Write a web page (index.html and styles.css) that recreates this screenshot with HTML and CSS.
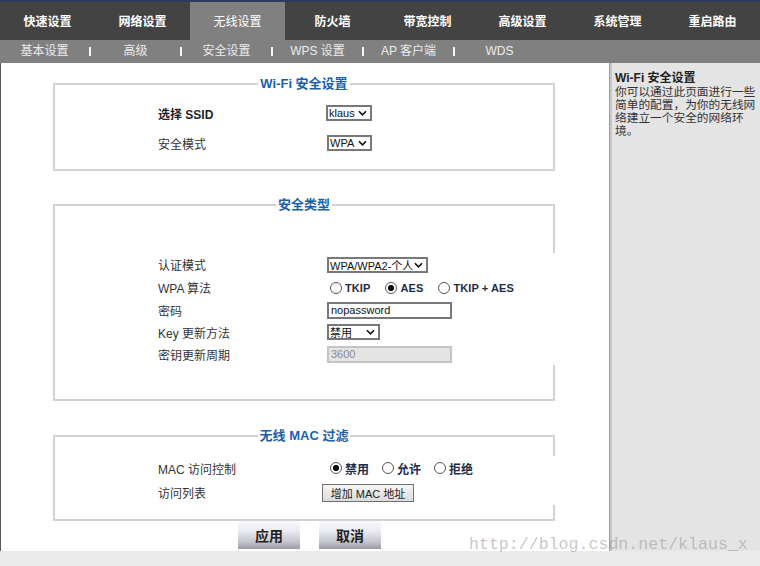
FILE: index.html
```html
<!DOCTYPE html>
<html lang="zh-CN">
<head>
<meta charset="utf-8">
<title>无线安全设置</title>
<link rel="stylesheet" href="styles.css">
</head>
<body>
<div class="topline"></div>
<nav class="nav">
  <a class="tab">快速设置</a>
  <a class="tab">网络设置</a>
  <a class="tab active">无线设置</a>
  <a class="tab">防火墙</a>
  <a class="tab">带宽控制</a>
  <a class="tab">高级设置</a>
  <a class="tab">系统管理</a>
  <a class="tab">重启路由</a>
</nav>
<div class="subnav">
  <span class="sub">基本设置</span><span class="sep"></span>
  <span class="sub">高级</span><span class="sep"></span>
  <span class="sub">安全设置</span><span class="sep"></span>
  <span class="sub">WPS 设置</span><span class="sep"></span>
  <span class="sub">AP 客户端</span><span class="sep"></span>
  <span class="sub">WDS</span>
</div>
<div class="content">
  <main class="main">
    <fieldset class="fs fs1">
      <legend>Wi-Fi 安全设置</legend>
      <div class="rows">
        <div class="row"><span class="lbl strong">选择 SSID</span><span class="sel w46">klaus<svg class="chev" viewBox="0 0 10 6"><path d="M1 1 L5 5 L9 1"/></svg></span></div>
        <div class="row"><span class="lbl">安全模式</span><span class="sel w45 ml1">WPA<svg class="chev" viewBox="0 0 10 6"><path d="M1 1 L5 5 L9 1"/></svg></span></div>
      </div>
    </fieldset>

    <fieldset class="fs fs2">
      <legend>安全类型</legend>
      <div class="rows">
        <div class="row"><span class="lbl">认证模式</span><span class="sel w101 ml1">WPA/WPA2-个人<svg class="chev" viewBox="0 0 10 6"><path d="M1 1 L5 5 L9 1"/></svg></span></div>
        <div class="row"><span class="lbl">WPA 算法</span>
          <span class="radios latin">
            <label class="opt"><input type="radio" name="alg" class="radio">TKIP</label>
            <label class="opt"><input type="radio" name="alg" class="radio" checked>AES</label>
            <label class="opt"><input type="radio" name="alg" class="radio">TKIP + AES</label>
          </span>
        </div>
        <div class="row"><span class="lbl">密码</span><input class="inp ml1" type="text" value="nopassword"></div>
        <div class="row"><span class="lbl">Key 更新方法</span><span class="sel w53 ml1">禁用<svg class="chev" viewBox="0 0 10 6"><path d="M1 1 L5 5 L9 1"/></svg></span></div>
        <div class="row"><span class="lbl">密钥更新周期</span><input class="inp dis ml1" type="text" value="3600" disabled></div>
      </div>
    </fieldset>

    <fieldset class="fs fs3">
      <legend>无线 MAC 过滤</legend>
      <div class="rows">
        <div class="row"><span class="lbl">MAC 访问控制</span>
          <span class="radios cjk">
            <label class="opt"><input type="radio" name="mac" class="radio" checked>禁用</label>
            <label class="opt"><input type="radio" name="mac" class="radio">允许</label>
            <label class="opt"><input type="radio" name="mac" class="radio">拒绝</label>
          </span>
        </div>
        <div class="row"><span class="lbl">访问列表</span><button class="btn-s" type="button">增加 MAC 地址</button></div>
      </div>
    </fieldset>

    <div class="actions">
      <button class="big" type="button">应用</button>
      <button class="big" type="button">取消</button>
    </div>
  </main>
  <aside class="side">
    <div class="side-title">Wi-Fi 安全设置</div>
    <p class="side-text">你可以通过此页面进行一些简单的配置，为你的无线网络建立一个安全的网络环境。</p>
  </aside>
</div>
<footer class="foot"></footer>
<div class="watermark">http://blog.csdn.net/klaus_x</div>
</body>
</html>
```

FILE: styles.css
```css
* { box-sizing: border-box; }

body {
  margin: 0;
  width: 760px;
  height: 566px;
  overflow: hidden;
  position: relative;
  background: #fff;
  font-family: "Liberation Sans", "Noto Sans CJK SC", sans-serif;
  font-size: 12px;
  color: #333;
}

.topline { height: 2px; background: #2d3b5e; }

.nav { display: flex; height: 38px; background: #434343; }
.tab {
  width: 95px;
  display: flex;
  align-items: center;
  justify-content: center;
  padding-bottom: 1px;
  color: #fff;
  font-weight: bold;
  font-size: 12px;
}
.tab.active { background: #808080; font-weight: normal; }

.subnav {
  display: flex;
  align-items: center;
  height: 23px;
  background: #808080;
  color: #ececec;
}
.sub { width: 89px; text-align: center; line-height: 23px; }
.sep { width: 2px; height: 9px; background: #f4f4f4; }

.content { display: flex; height: 488px; }

.main {
  width: 610px;
  border-left: 1px solid #5a5a5a;
  border-right: 1px solid #9c9c9c;
  padding: 13px 0 0 52px;
}

.side {
  flex: 1;
  background: #e4e4e4;
  border-left: 2px solid #c8c8c8;
  padding: 9px 0 0 3px;
  color: #333;
  font-size: 11.7px;
  line-height: 13px;
}
.side-title { font-weight: bold; color: #222; font-size: 12px; }
.side-text { margin: 0; }

.fs {
  width: 502px;
  margin: 0;
  border: 2px solid #d2d2d2;
  padding: 0;
  min-width: 0;
}
.fs legend {
  margin: 0 auto;
  padding: 0 2px;
  font-weight: bold;
  font-size: 13px;
  line-height: 16px;
  color: #1b5fae;
}

.fs1 { padding: 6px 0 11px; }
.fs2 { margin-top: 26px; padding: 40px 0 34px; }
.fs3 { margin-top: 27px; padding: 12px 0 14px; }

.rows { padding-left: 103px; }
.fs2 .rows, .fs3 .rows { background: #fff; margin-right: -6px; }

.row {
  display: grid;
  grid-template-columns: 168px auto;
  align-items: center;
  justify-items: start;
}
.fs1 .row { height: 30px; }
.fs2 .row { height: 22px; }
.fs2 .row:nth-child(1), .fs2 .row:nth-child(2) { height: 23px; }
.fs3 .row:nth-child(1) { height: 24px; }
.fs3 .row:nth-child(2) { height: 25px; }

.lbl { color: #333; }
.lbl.strong { font-weight: bold; color: #222; }
.ml1 { margin-left: 1px; }

.sel {
  display: inline-flex;
  align-items: center;
  justify-content: space-between;
  height: 16px;
  border: 2px solid #787878;
  background: #fff;
  padding: 0 3px 0 1px;
  font-size: 11px;
  color: #111;
}
.w46 { width: 46px; }
.w45 { width: 45px; }
.w101 { width: 101px; }
.w53 { width: 53px; }
.chev { width: 9px; height: 6px; fill: none; stroke: #111; stroke-width: 1.8; }

.inp {
  width: 125px;
  height: 17px;
  border: 2px solid #787878;
  padding: 0 2px;
  font-family: inherit;
  font-size: 11px;
  color: #111;
  background: #fff;
  outline: none;
}
.inp.dis { background: #e4e4e4; border-color: #c4c4c4; color: #8a8a8a; }

.radios { display: flex; align-items: center; }
.opt {
  display: inline-flex;
  align-items: center;
  font-weight: bold;
  color: #1d2c4a;
}
.latin .opt { font-size: 11px; margin-right: 11px; letter-spacing: 0.1px; }
.cjk .opt { font-size: 12px; margin-right: 9px; }
.radio {
  appearance: none;
  -webkit-appearance: none;
  width: 12px;
  height: 12px;
  margin: 0 3px 0 4px;
  border: 1px solid #555;
  border-radius: 50%;
  background: #fff;
}
.radio:checked {
  background: radial-gradient(circle, #111 0 2.8px, #fff 3.4px);
}

.btn-s {
  margin-left: -4px;
  width: 92px;
  height: 18px;
  padding: 0;
  border: 1px solid #707070;
  background: linear-gradient(#f6f6f6, #dcdcdc);
  font-family: inherit;
  font-size: 11px;
  color: #222;
}

.actions { display: flex; gap: 19px; margin-left: 185px; }
.big {
  width: 62px;
  height: 28px;
  padding: 0;
  border: 0;
  background: linear-gradient(#f6f6fc 0%, #ececf4 35%, #c4c4cc 75%, #9a9aa2 100%);
  font-family: inherit;
  font-weight: bold;
  font-size: 14px;
  color: #222;
}

.foot { height: 15px; background: #ebebeb; }

.watermark {
  position: absolute;
  left: 469px;
  top: 535px;
  font-family: "Liberation Mono", monospace;
  font-size: 16.6px;
  color: rgba(150, 150, 150, 0.55);
  white-space: nowrap;
}
```
